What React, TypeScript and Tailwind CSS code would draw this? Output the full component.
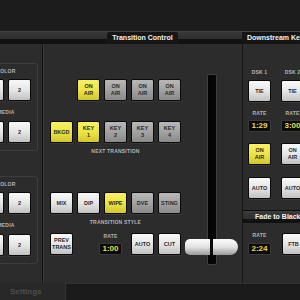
import type { ReactNode } from "react";

type Variant = "white" | "gray" | "yellow";

const btnBase =
  "flex h-[22px] w-[23px] shrink-0 flex-col items-center justify-center rounded-[2px] border border-[#0a0a0a] text-[5.5px] font-bold leading-[7px] text-[#2a2a2a] shadow-[0_1px_0_rgba(255,255,255,0.07)]";

const variants: Record<Variant, string> = {
  white: "bg-linear-to-b from-[#f8f8f8] via-[#e6e6e6] to-[#c2c2c2]",
  gray: "bg-linear-to-b from-[#b8b8b8] via-[#a2a2a2] to-[#8a8a8a]",
  yellow: "bg-linear-to-b from-[#f8f262] via-[#ece446] to-[#d2c72a]",
};

const headerBg = "bg-[linear-gradient(to_bottom,#4a4a4a_0px,#383838_1px,#2f2f2f_8px,#131313_8px,#101010_13px)]";

function Btn({ lines, variant = "white" }: { lines: string[]; variant?: Variant }) {
  return (
    <div className={`${btnBase} ${variants[variant]}`}>
      {lines.map((l) => (
        <span key={l}>{l}</span>
      ))}
    </div>
  );
}

function Label({ children, className = "" }: { children: ReactNode; className?: string }) {
  return (
    <div className={`flex h-[8px] items-center justify-center text-[5px] font-bold tracking-[0.2px] text-[#b4b4b4] ${className}`}>
      {children}
    </div>
  );
}

function Rate({ value }: { value: string }) {
  return (
    <div className="flex h-[12px] w-[23px] items-center justify-center rounded-[1px] border border-[#3a3a3a] bg-[#0b0b0b] text-[8px] font-bold text-[#e9dc4e]">
      {value}
    </div>
  );
}

function SourceBox({ className = "" }: { className?: string }) {
  return (
    <div className={`w-[64px] shrink-0 rounded-[3px] border border-[#3d3d3d] px-[6px] pt-[4px] pb-[7px] ${className}`}>
      <Label>COLOR</Label>
      <div className="mt-[3px] flex gap-[4px]">
        <Btn lines={["1"]} />
        <Btn lines={["2"]} />
      </div>
      <Label className="mt-[8px]">MEDIA</Label>
      <div className="mt-[4px] flex gap-[4px]">
        <Btn lines={["1"]} />
        <Btn lines={["2"]} />
      </div>
    </div>
  );
}

export default function App() {
  return (
    <div className="flex h-[300px] w-[300px] flex-col overflow-hidden bg-[#1c1c1c] font-['Liberation_Sans',Arial,sans-serif]">
      <div className="h-[31px] shrink-0" />

      {/* section headers */}
      <div className="flex h-[13px] shrink-0">
        <div className={`w-[43px] shrink-0 ${headerBg}`} />
        <div className={`flex w-[199px] shrink-0 justify-center ${headerBg}`}>
          <div className="mt-[1px] flex items-center rounded-t-[2px] bg-[#161616] px-[5px] text-[7px] font-bold text-[#f2f2f2]">
            Transition Control
          </div>
        </div>
        <div className="flex flex-1 items-center border-t border-[#454545] bg-[#151515] pl-[5px] text-[7px] font-bold whitespace-nowrap text-[#f2f2f2]">
          Downstream Keyers
        </div>
      </div>

      {/* main panel */}
      <div className="flex min-h-0 flex-1 bg-[#2c2c2c]">
        <div className="flex w-[43px] shrink-0 flex-col items-end border-r border-[#141414] pt-[19px] pr-[4px]">
          <SourceBox />
          <SourceBox className="mt-[25px]" />
        </div>

        <div className="flex w-[199px] shrink-0 border-l border-[#3a3a3a]">
          <div className="w-[137px] shrink-0 pt-[35px] pl-[6px]">
            <div className="flex gap-[4px]">
              <div className="w-[23px] shrink-0" />
              <Btn lines={["ON", "AIR"]} variant="yellow" />
              <Btn lines={["ON", "AIR"]} variant="gray" />
              <Btn lines={["ON", "AIR"]} variant="gray" />
              <Btn lines={["ON", "AIR"]} variant="gray" />
            </div>
            <div className="mt-[20px] flex gap-[4px]">
              <Btn lines={["BKGD"]} variant="yellow" />
              <Btn lines={["KEY", "1"]} variant="yellow" />
              <Btn lines={["KEY", "2"]} variant="gray" />
              <Btn lines={["KEY", "3"]} variant="gray" />
              <Btn lines={["KEY", "4"]} variant="gray" />
            </div>
            <Label className="mt-[5px]">NEXT TRANSITION</Label>

            <div className="mt-[36px] flex gap-[4px]">
              <Btn lines={["MIX"]} />
              <Btn lines={["DIP"]} />
              <Btn lines={["WIPE"]} variant="yellow" />
              <Btn lines={["DVE"]} variant="gray" />
              <Btn lines={["STING"]} variant="gray" />
            </div>
            <Label className="mt-[5px]">TRANSITION STYLE</Label>

            <div className="mt-[6px] flex items-start">
              <Btn lines={["PREV", "TRANS"]} />
              <div className="ml-[26px] flex w-[23px] flex-col items-center">
                <Label>RATE</Label>
                <div className="mt-[2px]">
                  <Rate value="1:00" />
                </div>
              </div>
              <div className="ml-[9px] flex gap-[4px]">
                <Btn lines={["AUTO"]} />
                <Btn lines={["CUT"]} />
              </div>
            </div>
          </div>

          {/* T-bar */}
          <div className="relative flex-1 pt-[30px]">
            <div className="mx-auto h-[191px] w-[10px] rounded-[2px] border border-[#404040] bg-[#060606] shadow-[inset_1px_0_2px_rgba(0,0,0,0.9)]" />
            <div className="absolute top-[195px] left-[4px] flex h-[16px] w-[53px]">
              <div className="h-full w-[25px] rounded-l-[5px] bg-linear-to-b from-[#fdfdfd] via-[#e2e2e2] to-[#9a9a9a]" />
              <div className="h-full w-[3px] bg-[#0a0a0a]" />
              <div className="h-full w-[25px] rounded-r-[8px] bg-linear-to-b from-[#fdfdfd] via-[#e2e2e2] to-[#9a9a9a]" />
            </div>
          </div>
        </div>

        <div className="flex flex-1 flex-col border-l border-[#141414]">
          <div className="flex gap-[10px] pt-[25px] pl-[5px]">
            {[
              { dsk: "DSK 1", rate: "1:29", on: true },
              { dsk: "DSK 2", rate: "3:00", on: false },
            ].map((k) => (
              <div key={k.dsk} className="flex w-[23px] shrink-0 flex-col items-center">
                <Label className="whitespace-nowrap">{k.dsk}</Label>
                <div className="mt-[3px]">
                  <Btn lines={["TIE"]} />
                </div>
                <Label className="mt-[8px]">RATE</Label>
                <div className="mt-[2px]">
                  <Rate value={k.rate} />
                </div>
                <div className="mt-[11px]">
                  <Btn lines={["ON", "AIR"]} variant={k.on ? "yellow" : "white"} />
                </div>
                <div className="mt-[12px]">
                  <Btn lines={["AUTO"]} />
                </div>
              </div>
            ))}
          </div>

          <div className={`mt-[11px] flex h-[13px] items-center border-t border-[#0c0c0c] pl-[12px] text-[7px] font-bold whitespace-nowrap text-[#f2f2f2] ${headerBg}`}>
            Fade to Black
          </div>

          <div className="mt-[9px] flex items-end gap-[11px] pl-[5px]">
            <div className="flex w-[23px] flex-col items-center">
              <Label>RATE</Label>
              <div className="mt-[3px]">
                <Rate value="2:24" />
              </div>
            </div>
            <Btn lines={["FTB"]} />
          </div>
        </div>
      </div>

      {/* bottom tabs */}
      <div className="flex h-[17px] shrink-0 bg-[#1b1b1b]">
        <div className="flex w-[65px] items-center bg-[#282828] pl-[10px] text-[8px] font-bold text-[#4e4e4e]">
          Settings
        </div>
        <div className="flex-1 border-t border-l border-[#333] bg-[#1b1b1b]" />
      </div>
    </div>
  );
}
